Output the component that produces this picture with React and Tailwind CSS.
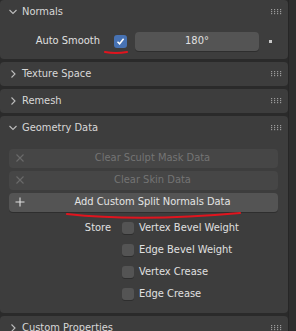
import React from 'react';

const font = { fontFamily: '"DejaVu Sans Condensed", "DejaVu Sans", "Liberation Sans", sans-serif' };

const Chevron = ({ open }) =>
  open ? (
    <svg width="10" height="10" viewBox="0 0 10 10" className="shrink-0">
      <path d="M1.5 3 L5 6.5 L8.5 3" fill="none" stroke="#bdbdbd" strokeWidth="1.1" />
    </svg>
  ) : (
    <svg width="10" height="10" viewBox="0 0 10 10" className="shrink-0">
      <path d="M3.5 1.5 L7 5 L3.5 8.5" fill="none" stroke="#bdbdbd" strokeWidth="1.1" />
    </svg>
  );

const Grip = () => (
  <svg width="11" height="6" viewBox="0 0 11 6" className="shrink-0">
    {[0, 3, 6, 9].map(x =>
      [0, 2, 4].map(y => <rect key={`${x}-${y}`} x={x} y={y} width="1.2" height="1.2" fill="#9a9a9a" />)
    )}
  </svg>
);

const Header = ({ title, open }) => (
  <div className="flex items-center h-[24px] pl-[8px] pr-[6px]">
    <Chevron open={open} />
    <span className="ml-[4px] text-[11px] text-[#d8d8d8]">{title}</span>
    <div className="ml-auto">
      <Grip />
    </div>
  </div>
);

const Panel = ({ children, className = '' }) => (
  <div className={`shrink-0 bg-[#3d3d3d] rounded-[4px] ${className}`}>{children}</div>
);

const XIcon = () => (
  <svg width="10" height="10" viewBox="0 0 10 10">
    <path d="M1.5 1.5 L8.5 8.5 M8.5 1.5 L1.5 8.5" stroke="#6a6a6a" strokeWidth="1.1" />
  </svg>
);

const PlusIcon = () => (
  <svg width="10" height="10" viewBox="0 0 10 10">
    <path d="M5 0.5 V9.5 M0.5 5 H9.5" stroke="#e0e0e0" strokeWidth="1.1" />
  </svg>
);

const OpButton = ({ label, disabled }) => (
  <div
    className={`relative flex items-center justify-center h-[19px] pl-[18px] rounded-[4px] ${
      disabled ? 'bg-[#464646] text-[#747474]' : 'bg-[#545454] text-[#e4e4e4] shadow-[0_1px_0_#2e2e2e]'
    } text-[11px]`}
  >
    <div className="absolute left-[6px] top-[4px]">{disabled ? <XIcon /> : <PlusIcon />}</div>
    <span>{label}</span>
  </div>
);

const Check = ({ label }) => (
  <div className="flex items-center h-[22px]">
    <div className="w-[12px] h-[12px] rounded-[3px] bg-[#545454] shadow-[0_1px_0_#2e2e2e]" />
    <span className="ml-[5px] text-[11px] text-[#e0e0e0]">{label}</span>
  </div>
);

export default function App() {
  return (
    <div className="relative w-[296px] h-[331px] bg-[#2a2a2a] overflow-hidden flex" style={font}>
      <div className="w-[288px] flex flex-col gap-[3px]">
        {/* Normals */}
        <Panel className="h-[59px]">
          <Header title="Normals" open />
          <div className="flex items-center h-[35px] pb-[1px]">
            <span className="w-[100px] text-right text-[11px] text-[#e0e0e0]">Auto Smooth</span>
            <div className="ml-[14px] w-[13px] h-[13px] rounded-[3px] bg-[#4772b3] flex items-center justify-center">
              <svg width="9" height="9" viewBox="0 0 9 9">
                <path d="M1.5 4.8 L3.6 6.8 L7.6 1.8" fill="none" stroke="#ffffff" strokeWidth="1.5" />
              </svg>
            </div>
            <div className="ml-[8px] w-[124px] h-[19px] rounded-[4px] bg-[#545454] shadow-[0_1px_0_#2e2e2e] flex items-center justify-center text-[11px] text-[#e0e0e0]">
              180°
            </div>
            <div className="ml-[10px] w-[3px] h-[3px] bg-[#c8c8c8]" />
          </div>
        </Panel>

        <Panel className="h-[24px]">
          <Header title="Texture Space" />
        </Panel>

        <Panel className="h-[24px]">
          <Header title="Remesh" />
        </Panel>

        {/* Geometry Data */}
        <Panel className="h-[197px]">
          <Header title="Geometry Data" open />
          <div className="flex flex-col gap-[3px] pl-[9px] pr-[10px] pt-[9px]">
            <OpButton label="Clear Sculpt Mask Data" disabled />
            <OpButton label="Clear Skin Data" disabled />
            <OpButton label="Add Custom Split Normals Data" />
          </div>
          <div className="flex mt-[5px]">
            <div className="w-[111px] h-[22px] flex items-center justify-end text-[11px] text-[#e0e0e0]">Store</div>
            <div className="ml-[11px] flex flex-col">
              <Check label="Vertex Bevel Weight" />
              <Check label="Edge Bevel Weight" />
              <Check label="Vertex Crease" />
              <Check label="Edge Crease" />
            </div>
          </div>
        </Panel>

        <Panel className="h-[24px] rounded-b-none">
          <Header title="Custom Properties" />
        </Panel>
      </div>
      <div className="w-[8px] bg-[#2e2e2e] border-l border-[#262626]" />

      {/* red annotation strokes */}
      <svg className="absolute left-0 top-0 pointer-events-none" width="296" height="331" viewBox="0 0 296 331">
        <path d="M105 52 Q116 54 127 52" fill="none" stroke="#e0141e" strokeWidth="2.2" strokeLinecap="round" />
        <path d="M67 214 Q140 222 240 213" fill="none" stroke="#e0141e" strokeWidth="2.2" strokeLinecap="round" />
      </svg>
    </div>
  );
}
